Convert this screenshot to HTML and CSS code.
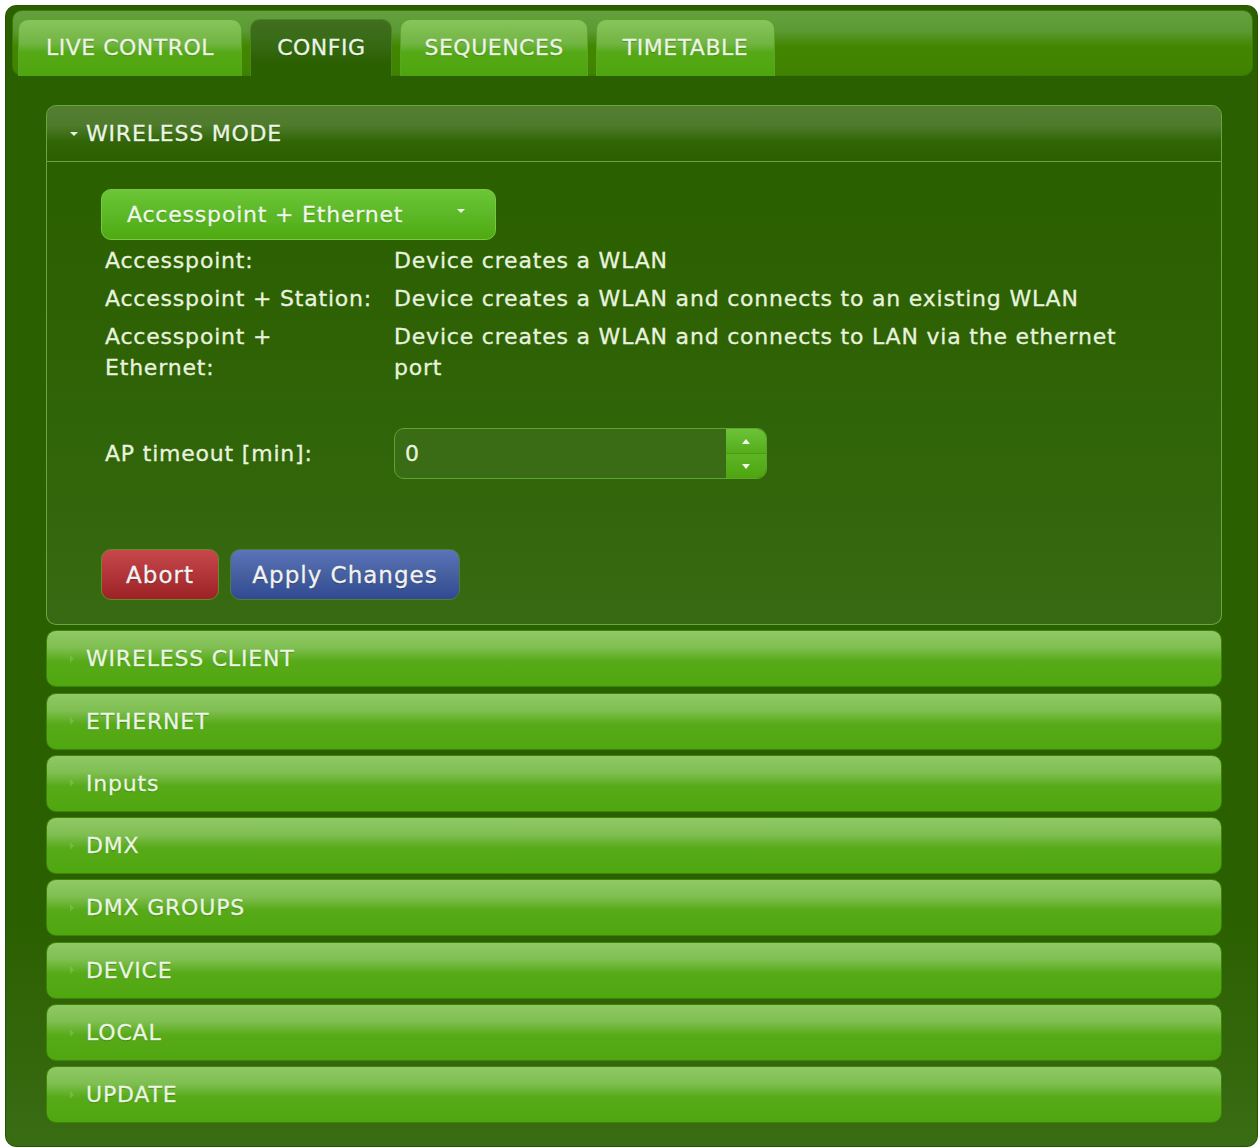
FILE: index.html
```html
<!DOCTYPE html>
<html lang="en">
<head>
<meta charset="utf-8">
<title>Config</title>
<link rel="stylesheet" href="styles.css">
</head>
<body>
<div class="app">
  <ul class="tabs">
    <li class="tab">LIVE CONTROL</li>
    <li class="tab active">CONFIG</li>
    <li class="tab">SEQUENCES</li>
    <li class="tab">TIMETABLE</li>
  </ul>

  <div class="panel">
    <section class="acc-item open">
      <h3 class="acc-head"><span class="caret-down"></span>WIRELESS MODE</h3>
      <div class="acc-body">
        <div class="select">
          <span>Accesspoint + Ethernet</span>
          <span class="caret-down"></span>
        </div>

        <div class="info">
          <div class="cell">Accesspoint:</div>
          <div class="cell">Device creates a WLAN</div>
          <div class="cell">Accesspoint + Station:</div>
          <div class="cell">Device creates a WLAN and connects to an existing WLAN</div>
          <div class="cell">Accesspoint + Ethernet:</div>
          <div class="cell">Device creates a WLAN and connects to LAN via the ethernet port</div>
        </div>

        <div class="field">
          <label class="field-label" for="ap-timeout">AP timeout [min]:</label>
          <div class="spinner">
            <input id="ap-timeout" class="spinner-input" type="text" value="0">
            <div class="spinner-btns">
              <span class="spin up"><span class="caret-up"></span></span>
              <span class="spin down"><span class="caret-down"></span></span>
            </div>
          </div>
        </div>

        <div class="actions">
          <button class="btn btn-red">Abort</button>
          <button class="btn btn-blue">Apply Changes</button>
        </div>
      </div>
    </section>

    <h3 class="acc-head closed"><span class="caret-right"></span>WIRELESS CLIENT</h3>
    <h3 class="acc-head closed"><span class="caret-right"></span>ETHERNET</h3>
    <h3 class="acc-head closed"><span class="caret-right"></span>Inputs</h3>
    <h3 class="acc-head closed"><span class="caret-right"></span>DMX</h3>
    <h3 class="acc-head closed"><span class="caret-right"></span>DMX GROUPS</h3>
    <h3 class="acc-head closed"><span class="caret-right"></span>DEVICE</h3>
    <h3 class="acc-head closed"><span class="caret-right"></span>LOCAL</h3>
    <h3 class="acc-head closed"><span class="caret-right"></span>UPDATE</h3>
  </div>
</div>
</body>
</html>
```

FILE: styles.css
```css
* { box-sizing: border-box; }

html, body {
  margin: 0;
  padding: 0;
  background: #ffffff;
}

body {
  font-family: "DejaVu Sans", "Verdana", sans-serif;
  font-size: 22px;
  letter-spacing: 0.8px;
  color: #e8f3df;
  -webkit-text-stroke: 0.3px currentColor;
}

/* outer widget */
.app {
  margin: 5px 1px 0 5px;
  height: 1142px;
  border: 1px solid #245400;
  border-radius: 11px;
  padding: 4px 4px 22px 6px;
  background: linear-gradient(to bottom, #2b6000 0%, #2b6000 80%, #3a6c14 100%);
}

/* tab strip */
.tabs {
  list-style: none;
  margin: 0;
  height: 66px;
  padding: 8px 0 0 5px;
  display: flex;
  align-items: flex-start;
  gap: 8px;
  border: 1px solid #3a7a05;
  border-radius: 10px;
  background: linear-gradient(to bottom, #64a13e 0%, #5b9a35 30%, #438700 55%, #3e8200 100%);
}

.tab {
  height: 57px;
  padding: 0 26px 1px;
  display: flex;
  align-items: center;
  border: 1px solid #5aa526;
  border-bottom: none;
  border-radius: 10px 10px 0 0;
  background: linear-gradient(to bottom, #88c45d 0%, #72b543 42%, #55a916 58%, #4ea50e 100%);
  color: #eaf5e2;
  letter-spacing: 0.5px;
  text-shadow: 0 1px 1px rgba(0, 0, 0, 0.25);
  white-space: nowrap;
}

.tab:first-child {
  padding: 0 27px 1px 27px;
}

.tab:nth-child(3) {
  padding: 0 23px 1px;
}

.tab.active {
  border-color: #4a8423;
  background: linear-gradient(to bottom, #406f1f 0%, #386a16 40%, #2c6102 75%, #2b6000 100%);
}

/* tab panel */
.panel {
  padding: 29px 31px 0 34px;
}

/* accordion */
.acc-head {
  margin: 0;
  height: 57px;
  display: flex;
  align-items: center;
  padding-left: 23px;
  font-size: 22px;
  font-weight: normal;
  color: #eaf5e2;
  text-shadow: 0 1px 1px rgba(0, 0, 0, 0.25);
  border-radius: 10px;
}

.acc-head.closed {
  margin-top: 5.3px;
  border: 1px solid #3c8507;
  background: linear-gradient(to bottom, #90c866 0%, #7fbf51 30%, #57aa18 55%, #4fa70f 100%);
}

.open .acc-head {
  border: 1px solid #67a83b;
  border-radius: 10px 10px 0 0;
  background: linear-gradient(to bottom, #547e32 0%, #4f7b2c 35%, #316506 65%, #2b6000 100%);
}

.caret-down,
.caret-right,
.caret-up {
  display: inline-block;
  width: 0;
  height: 0;
}

.acc-head .caret-down {
  margin: 0 8px 0 0;
  border-left: 4px solid transparent;
  border-right: 4px solid transparent;
  border-top: 4px solid #eaf5e2;
}

.caret-right {
  margin-right: 12px;
  border-top: 4px solid transparent;
  border-bottom: 4px solid transparent;
  border-left: 4px solid rgba(170, 215, 130, 0.3);
}

.acc-body {
  border: 1px solid #67a83b;
  border-top: none;
  border-radius: 0 0 10px 10px;
  padding: 27px 20px 24px 54px;
  height: 463px;
  background: linear-gradient(to bottom, #2b6000 0%, #2e6205 40%, #376a12 100%);
}

/* select-menu button */
.select {
  width: 395px;
  height: 51px;
  display: flex;
  align-items: center;
  justify-content: space-between;
  padding: 0 30px 0 25px;
  border: 1px solid #78c845;
  border-radius: 10px;
  background: linear-gradient(to bottom, #6cc637 0%, #5cb826 50%, #4eaa0f 100%);
  color: #eef8e8;
  text-shadow: 0 1px 1px rgba(0, 0, 0, 0.2);
}

.select .caret-down {
  margin-bottom: 8px;
  border-left: 4px solid transparent;
  border-right: 4px solid transparent;
  border-top: 4px solid #eef8e8;
}

/* mode description table */
.info {
  margin-top: 1px;
  display: grid;
  grid-template-columns: 289px 745px;
}

.cell {
  padding: 4px 12px 3px 4px;
  line-height: 31px;
}

/* timeout spinner */
.field {
  margin-top: 42px;
  display: grid;
  grid-template-columns: 293px auto;
  align-items: center;
}

.field-label {
  padding-left: 4px;
}

.spinner {
  width: 373px;
  height: 51px;
  display: flex;
  border: 1px solid #5ea62b;
  border-radius: 10px;
  overflow: hidden;
  background: #396c15;
}

.spinner-input {
  flex: 1;
  min-width: 0;
  border: none;
  outline: none;
  background: transparent;
  font: inherit;
  color: #e8f3df;
  padding: 0 0 0 10px;
}

.spinner-btns {
  width: 40px;
  display: flex;
  flex-direction: column;
}

.spin {
  flex: 1;
  display: flex;
  align-items: center;
  justify-content: center;
}

.spin.up {
  background: linear-gradient(to bottom, #6cc239 0%, #55ad1b 100%);
  border-bottom: 1px solid #4b9a14;
}

.spin.down {
  background: linear-gradient(to bottom, #5db526 0%, #4ea50e 100%);
}

.caret-up {
  border-left: 4px solid transparent;
  border-right: 4px solid transparent;
  border-bottom: 5px solid #f0f8ea;
}

.spin .caret-down {
  border-left: 4px solid transparent;
  border-right: 4px solid transparent;
  border-top: 5px solid #f0f8ea;
}

/* action buttons */
.actions {
  margin-top: 70px;
  display: flex;
  gap: 11px;
}

.btn {
  height: 51px;
  padding: 0;
  border-radius: 10px;
  font: inherit;
  font-size: 23px;
  letter-spacing: 1px;
  color: #f2f2f2;
  text-shadow: 0 1px 1px rgba(0, 0, 0, 0.3);
  cursor: pointer;
}

.btn-red {
  width: 118px;
  border: 1px solid #6d8a2a;
  background: linear-gradient(to bottom, #c6484c 0%, #b23539 50%, #9c2225 100%);
}

.btn-blue {
  width: 230px;
  border: 1px solid #4f7d3a;
  background: linear-gradient(to bottom, #5a73bb 0%, #46609f 50%, #2f4a93 100%);
}
```
